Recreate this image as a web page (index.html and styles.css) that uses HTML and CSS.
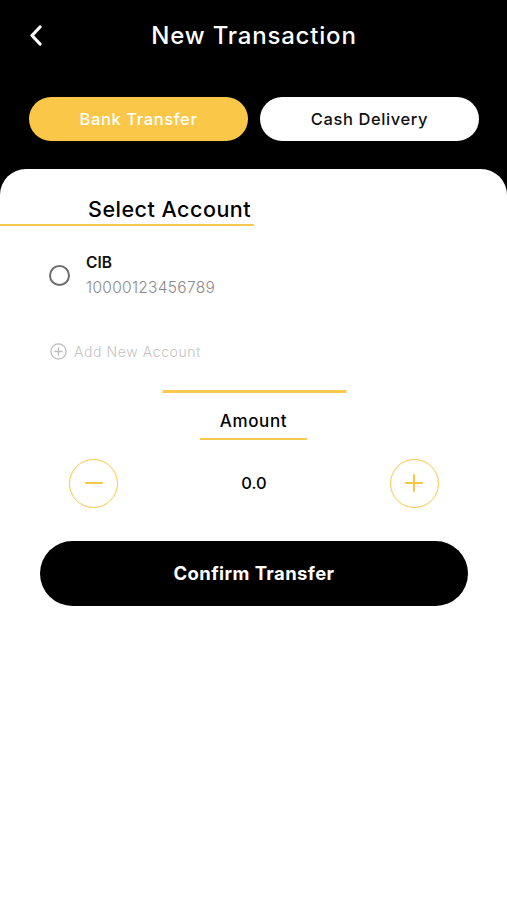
FILE: index.html
```html
<!DOCTYPE html>
<html>
<head>
<meta charset="utf-8">
<link rel="stylesheet" href="styles.css">
</head>
<body>
<div class="screen">
  <header class="top">
    <div class="titlebar">
      <button class="back" aria-label="Back">
        <svg width="14" height="21" viewBox="0 0 14 21"><path d="M11 2 L3 10.5 L11 19" fill="none" stroke="#fff" stroke-width="3.2" stroke-linecap="round" stroke-linejoin="round"/></svg>
      </button>
      <h1 class="title">New Transaction</h1>
      <span></span>
    </div>
    <div class="tabs">
      <div class="tab tab-active">Bank Transfer</div>
      <div class="tab">Cash Delivery</div>
    </div>
  </header>
  <main class="card">
    <h2 class="section-title">Select Account</h2>
    <div class="account">
      <span class="radio"></span>
      <div class="account-info">
        <div class="bank">CIB</div>
        <div class="number">10000123456789</div>
      </div>
    </div>
    <div class="add">
      <svg width="17" height="17" viewBox="0 0 17 17"><circle cx="8.5" cy="8.5" r="7.6" fill="none" stroke="#bdbdbd" stroke-width="1.3"/><path d="M8.5 4.8v7.4M4.8 8.5h7.4" stroke="#bdbdbd" stroke-width="1.3" stroke-linecap="round"/></svg>
      <span>Add New Account</span>
    </div>
    <div class="divider"></div>
    <div class="amount-label"><span>Amount</span></div>
    <div class="stepper">
      <button class="step" aria-label="Decrease">
        <svg width="20" height="20" viewBox="0 0 20 20"><path d="M2 10h16" stroke="#f9c646" stroke-width="2" stroke-linecap="round"/></svg>
      </button>
      <div class="value">0.0</div>
      <button class="step" aria-label="Increase">
        <svg width="20" height="20" viewBox="0 0 20 20"><path d="M2 10h16M10 2v16" stroke="#f9c646" stroke-width="2" stroke-linecap="round"/></svg>
      </button>
    </div>
    <button class="confirm">Confirm Transfer</button>
  </main>
</div>
</body>
</html>
```
FILE: styles.css
```css
* { box-sizing: border-box; }
html, body { margin: 0; padding: 0; }
body {
  background: #fff;
  font-family: "Inter", "Open Sans", "Liberation Sans", sans-serif;
  color: #000;
}
.screen {
  background: #000;
  min-height: 900px;
  display: flex;
  flex-direction: column;
}
.top { padding: 0 28px 28px 29px; }
.titlebar {
  height: 70px;
  display: grid;
  grid-template-columns: 1fr auto 1fr;
  align-items: center;
}
.back {
  background: none; border: 0; padding: 0; margin: 0;
  width: 14px; height: 21px; display: flex;
  justify-self: start;
}
.title {
  margin: 0;
  color: #fff;
  font-size: 24px;
  font-weight: 500;
  letter-spacing: 0.8px;
}
.tabs {
  margin-top: 27px;
  display: grid;
  grid-template-columns: 1fr 1fr;
  gap: 12px;
}
.tab {
  height: 44px;
  border-radius: 22px;
  background: #fff;
  color: #111;
  display: flex; align-items: center; justify-content: center;
  font-size: 16.5px;
  font-weight: 500;
  letter-spacing: 0.6px;
}
.tab-active { background: #fac748; color: #fff; }
.card {
  flex: 1;
  background: #fff;
  border-radius: 26px 26px 0 0;
  padding-top: 25px;
  display: flex;
  flex-direction: column;
}
.section-title {
  margin: 0;
  width: 254px;
  padding-left: 88px;
  font-size: 21.5px;
  font-weight: 500;
  letter-spacing: 0.5px;
  line-height: 30px;
  border-bottom: 2.5px solid #fbc952;
  white-space: nowrap;
}
.account {
  margin-top: 25px;
  padding-left: 49px;
  display: flex;
  align-items: center;
  gap: 16px;
}
.radio {
  width: 21px; height: 21px;
  border: 2.5px solid #6d6d6d;
  border-radius: 50%;
  margin-top: -2px;
}
.bank { font-size: 15.5px; font-weight: 600; line-height: 24px; color: #111; }
.number { font-size: 15.5px; font-weight: 300; line-height: 26px; color: #8a8a8a; letter-spacing: 0.3px; }
.add {
  margin-top: 42px;
  padding-left: 50px;
  display: flex; align-items: center; gap: 7px;
  font-size: 14px; font-weight: 300; color: #c4c4c4;
  letter-spacing: 0.6px;
}
.divider {
  margin: 30px auto 0;
  width: 184px;
  height: 2.5px;
  background: #fbc952;
  transform: translateX(0.5px);
}
.amount-label { margin-top: 16px; display: flex; justify-content: center; }
.amount-label span {
  width: 107px;
  text-align: center;
  font-size: 17px; font-weight: 500;
  letter-spacing: 0.6px;
  line-height: 24px;
  border-bottom: 2.5px solid #fbc952;
  padding-bottom: 5px;
}
.stepper {
  margin-top: 19px;
  padding: 0 68px 0 69px;
  display: flex; align-items: center; justify-content: space-between;
}
.step {
  width: 49px; height: 49px;
  border-radius: 50%;
  border: 1.5px solid #f9c646;
  background: #fff;
  display: flex; align-items: center; justify-content: center;
  padding: 0;
}
.value { font-size: 16.5px; font-weight: 500; }
.confirm {
  margin: 33px 39px 0 40px;
  height: 65px;
  border-radius: 33px;
  border: 0;
  background: #000;
  color: #fff;
  font-family: inherit;
  font-size: 18.5px;
  font-weight: 700;
  letter-spacing: 0.4px;
}
```
